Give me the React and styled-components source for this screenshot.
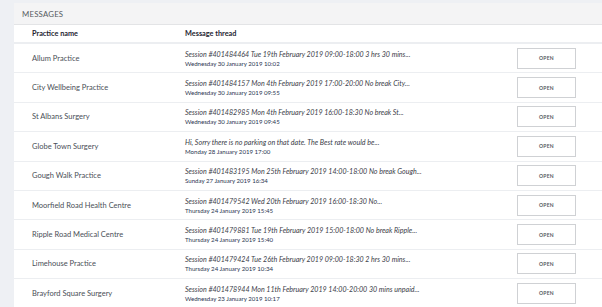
import React from 'react';
import styled, { createGlobalStyle } from 'styled-components';

const messages = [
  {
    practice: 'Allum Practice',
    thread: 'Session #401484464 Tue 19th February 2019 09:00-18:00 3 hrs 30 mins...',
    date: 'Wednesday 30 January 2019 10:02',
  },
  {
    practice: 'City Wellbeing Practice',
    thread: 'Session #401484157 Mon 4th February 2019 17:00-20:00 No break City...',
    date: 'Wednesday 30 January 2019 09:55',
  },
  {
    practice: 'St Albans Surgery',
    thread: 'Session #401482985 Mon 4th February 2019 16:00-18:30 No break St...',
    date: 'Wednesday 30 January 2019 09:45',
  },
  {
    practice: 'Globe Town Surgery',
    thread: 'Hi, Sorry there is no parking on that date. The Best rate would be...',
    date: 'Monday 28 January 2019 17:00',
  },
  {
    practice: 'Gough Walk Practice',
    thread: 'Session #401483195 Mon 25th February 2019 14:00-18:00 No break Gough...',
    date: 'Sunday 27 January 2019 16:34',
  },
  {
    practice: 'Moorfield Road Health Centre',
    thread: 'Session #401479542 Wed 20th February 2019 16:00-18:30 No...',
    date: 'Thursday 24 January 2019 15:45',
  },
  {
    practice: 'Ripple Road Medical Centre',
    thread: 'Session #401479881 Tue 19th February 2019 15:00-18:00 No break Ripple...',
    date: 'Thursday 24 January 2019 15:40',
  },
  {
    practice: 'Limehouse Practice',
    thread: 'Session #401479424 Tue 26th February 2019 09:00-18:30 2 hrs 30 mins...',
    date: 'Thursday 24 January 2019 10:34',
  },
  {
    practice: 'Brayford Square Surgery',
    thread: 'Session #401478944 Mon 11th February 2019 14:00-20:00 30 mins unpaid...',
    date: 'Wednesday 23 January 2019 10:17',
  },
];

const GlobalStyle = createGlobalStyle`
  html, body {
    margin: 0;
    padding: 0;
    background: #eef0f4;
    font-family: Lato, "Open Sans", sans-serif;
  }
`;

const App = () => {
  return (
    <>
      <GlobalStyle />
      <Page>
        <Card>
          <Header>Messages</Header>
          <HeadRow>
            <HeadCell>Practice name</HeadCell>
            <HeadCell>Message thread</HeadCell>
            <span />
          </HeadRow>
          {messages.map((m) => (
            <Row key={m.practice}>
              <Name>{m.practice}</Name>
              <Thread>
                <Preview>{m.thread}</Preview>
                <Date>{m.date}</Date>
              </Thread>
              <OpenButton>OPEN</OpenButton>
            </Row>
          ))}
        </Card>
      </Page>
    </>
  );
};

export default App;

const Page = styled.div`
  padding: 3px 0 0 14px;
  height: 304px;
  overflow: hidden;
`;

const Card = styled.div`
  background: #ffffff;
`;

const Header = styled.div`
  height: 21px;
  display: flex;
  align-items: center;
  padding-left: 8px;
  background: #f4f4f5;
  border-bottom: 1px solid #e3e4e6;
  font-size: 7.8px;
  text-transform: uppercase;
  letter-spacing: 0.2px;
  color: #555a60;
`;

const HeadRow = styled.div`
  display: grid;
  grid-template-columns: 153px 332px 59px;
  align-items: center;
  height: 17px;
  padding-left: 18px;
  border-bottom: 2px solid #eceef1;
`;

const HeadCell = styled.div`
  font-size: 7.3px;
  font-weight: 700;
  color: #1e2430;
`;

const Row = styled.div`
  display: grid;
  grid-template-columns: 153px 332px 59px;
  align-items: center;
  height: 28.4px;
  padding-left: 18px;
  border-bottom: 1px solid #eceef1;
`;

const Name = styled.div`
  font-size: 7.5px;
  color: #4a4f57;
`;

const Thread = styled.div`
  display: flex;
  flex-direction: column;
  gap: 1px;
`;

const Preview = styled.div`
  font-size: 7.1px;
  font-style: italic;
  color: #3c4049;
  white-space: nowrap;
`;

const Date = styled.div`
  font-size: 6.1px;
  color: #2a3550;
  white-space: nowrap;
`;

const OpenButton = styled.button`
  width: 59px;
  height: 21px;
  padding: 0;
  background: #ffffff;
  border: 1px solid #cfd1d4;
  font-family: Lato, sans-serif;
  font-size: 5px;
  font-weight: 700;
  letter-spacing: 0.3px;
  color: #555a60;
`;
